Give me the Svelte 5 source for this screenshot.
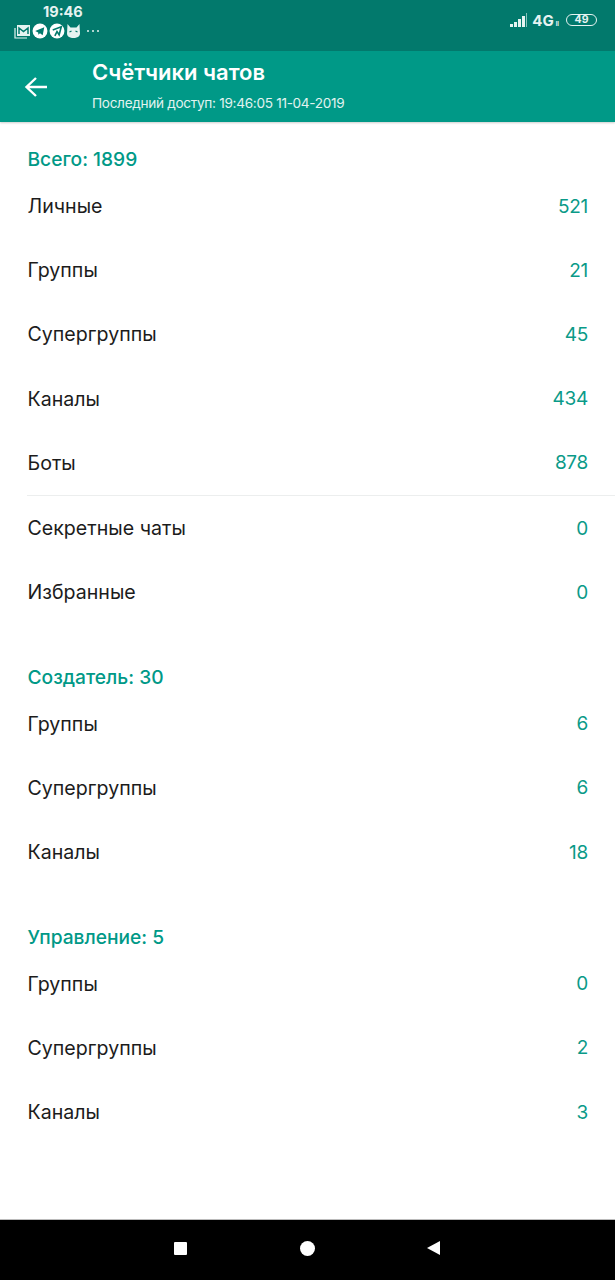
<script>
  const sections = [
    {
      title: "Всего: 1899",
      rows: [
        { label: "Личные", value: 521 },
        { label: "Группы", value: 21 },
        { label: "Супергруппы", value: 45 },
        { label: "Каналы", value: 434 },
        { label: "Боты", value: 878, divider: true },
        { label: "Секретные чаты", value: 0 },
        { label: "Избранные", value: 0 },
      ],
    },
    {
      title: "Создатель: 30",
      rows: [
        { label: "Группы", value: 6 },
        { label: "Супергруппы", value: 6 },
        { label: "Каналы", value: 18 },
      ],
    },
    {
      title: "Управление: 5",
      rows: [
        { label: "Группы", value: 0 },
        { label: "Супергруппы", value: 2 },
        { label: "Каналы", value: 3 },
      ],
    },
  ];
  const signal = [3, 5, 8, 11, 14];
</script>

<div class="screen">
  <header class="top">
    <div class="status">
      <div class="status-left">
        <div class="clock">19:46</div>
        <div class="notifs">
          <svg width="17" height="15" viewBox="0 0 17 15">
            <path d="M1 4v10h12" fill="none" stroke="#e6f3f1" stroke-width="1.2" />
            <rect x="3" y="1" width="13" height="11" fill="#e6f3f1" />
            <path d="M5 10V4l4.500 3.500L14 4v6" fill="none" stroke="#02796c" stroke-width="1.500" />
          </svg>
          <svg width="16" height="16" viewBox="0 0 15 15">
            <circle cx="7.500" cy="7.500" r="7" fill="#fff" />
            <path d="M3 7.500 11.500 4 10 11.500 7.500 9.500 6 11 5.800 8.800Z" fill="#02796c" />
          </svg>
          <svg width="16" height="16" viewBox="0 0 15 15">
            <circle cx="7.500" cy="7.500" r="7" fill="#fff" />
            <path d="M3.500 6.500 11.500 3.500 9.500 11 7.500 8 5.500 12" fill="none" stroke="#02796c" stroke-width="1.500" />
          </svg>
          <svg width="15" height="16" viewBox="0 0 15 15">
            <path d="M1.500 .5 4.500 4h6l3-3.500.5 9.500c0 3-3 4.500-6.500 4.500S1 13 1 10Z" fill="#e6f3f1" />
            <path d="M3.500 8.500 5.500 7.500M11.500 8.500 9.500 7.500" stroke="#02796c" stroke-width="1.200" />
          </svg>
          <div class="dots"><i></i><i></i><i></i></div>
        </div>
      </div>
      <div class="status-right">
        <div class="bars">
          {#each signal as h}
            <i style="height: {h}px"></i>
          {/each}
        </div>
        <span class="net">4G</span>
        <span class="net-small">ll</span>
        <span class="battery">49</span>
      </div>
    </div>
    <div class="toolbar">
      <svg class="back" width="24" height="24" viewBox="0 0 24 24">
        <path d="M23 12H3M12 3 2.500 12l9.500 9" fill="none" stroke="#fff" stroke-width="2.400" />
      </svg>
      <div class="titles">
        <div class="title">Счётчики чатов</div>
        <div class="subtitle">Последний доступ: 19:46:05 11-04-2019</div>
      </div>
    </div>
  </header>

  <main class="content">
    {#each sections as section}
      <section class="block">
        <h2>{section.title}</h2>
        {#each section.rows as row}
          <div class="row">
            <span class="label">{row.label}</span>
            <span class="value">{row.value}</span>
          </div>
          {#if row.divider}
            <div class="divider"></div>
          {/if}
        {/each}
      </section>
    {/each}
  </main>

  <nav class="nav">
    <span class="square"></span>
    <span class="circle"></span>
    <span class="triangle"></span>
  </nav>
</div>

<style>
  :global(body) {
    margin: 0;
    background: #fff;
  }

  .screen {
    width: 615px;
    height: 1280px;
    display: flex;
    flex-direction: column;
    font-family: Inter, "Noto Sans", sans-serif;
    overflow: hidden;
  }

  .top {
    box-shadow: 0 1px 2px rgba(0, 0, 0, 0.2);
    position: relative;
  }

  .status {
    height: 51px;
    background: #02796c;
    display: flex;
    justify-content: space-between;
    box-sizing: border-box;
  }

  .status-left {
    padding-left: 14px;
  }

  .clock {
    color: #e6f3f1;
    font-size: 14.500px;
    font-weight: 700;
    line-height: 16px;
    margin: 4px 0 0 29px;
  }

  .notifs {
    display: flex;
    align-items: center;
    gap: 1px;
    margin-top: 3px;
  }

  .dots {
    display: flex;
    gap: 3px;
    margin-left: 5px;
  }

  .dots i {
    width: 2px;
    height: 2px;
    border-radius: 50%;
    background: #e6f3f1;
  }

  .status-right {
    display: flex;
    align-items: center;
    height: 40px;
    padding-right: 18px;
    color: #e6f3f1;
  }

  .bars {
    display: flex;
    align-items: flex-end;
    gap: 1px;
    height: 14px;
    margin-right: 3px;
    margin-top: -1px;
  }

  .bars i {
    width: 3px;
    background: #e6f3f1;
  }

  .bars i:last-child {
    width: 1px;
    opacity: 0.6;
  }

  .net {
    font-size: 15px;
    font-weight: 700;
    margin-left: 2px;
  }

  .net-small {
    font-size: 6px;
    font-weight: 700;
    margin: 6px 7px 0 2px;
  }

  .battery {
    width: 29px;
    height: 10px;
    border: 1.500px solid #e6f3f1;
    border-radius: 7px;
    font-size: 10.500px;
    font-weight: 700;
    line-height: 10px;
    text-align: center;
  }

  .toolbar {
    height: 71px;
    background: #009987;
    display: flex;
    align-items: center;
    color: #fff;
  }

  .back {
    margin: 0 0 0 24px;
  }

  .titles {
    margin-left: 44px;
  }

  .title {
    font-size: 22px;
    font-weight: 600;
    line-height: 26px;
    margin-top: -3px;
  }

  .subtitle {
    font-size: 13.600px;
    line-height: 18px;
    margin-top: 9px;
    letter-spacing: -0.3px;
    color: #e2f3f0;
  }

  .content {
    flex: 1;
  }

  .block {
    padding-top: 37.400px;
  }

  .block:first-child {
    padding-top: 22px;
  }

  h2 {
    margin: 0;
    height: 30px;
    padding-left: 27.500px;
    font-size: 19.200px;
    font-weight: 500;
    line-height: 30px;
    color: #009987;
  }

  .row {
    height: 64.200px;
    display: flex;
    align-items: center;
    justify-content: space-between;
    padding: 0 27px 0 27.500px;
    font-size: 19.600px;
  }

  .label {
    color: #1c1c1c;
  }

  .value {
    color: #0a9a88;
    font-size: 19px;
    letter-spacing: -0.3px;
  }

  .divider {
    height: 1px;
    margin-left: 27px;
    background: #eceeee;
  }

  .nav {
    height: 61px;
    background: #000;
    border-top: 1px solid #bbb;
    box-sizing: border-box;
    position: relative;
  }

  .square {
    position: absolute;
    left: 174px;
    top: 22px;
    width: 13px;
    height: 13px;
    background: #fff;
    border-radius: 1px;
  }

  .circle {
    position: absolute;
    left: 300px;
    top: 21px;
    width: 15px;
    height: 15px;
    background: #fff;
    border-radius: 50%;
  }

  .triangle {
    position: absolute;
    left: 427px;
    top: 21px;
    border-style: solid;
    border-width: 7.500px 13px 7.500px 0;
    border-color: transparent #fff transparent transparent;
  }
</style>
